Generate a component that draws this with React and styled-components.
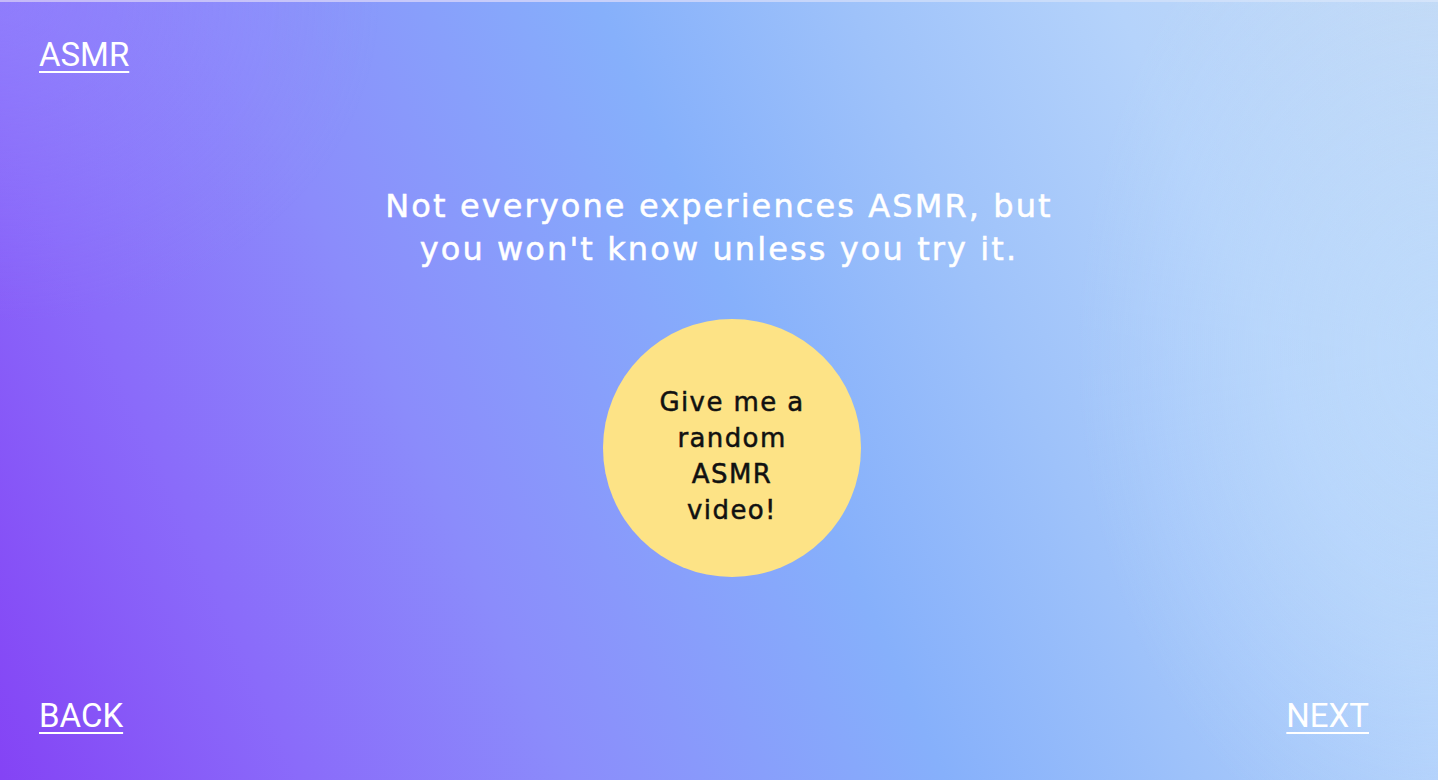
import React from "react";
import styled, { createGlobalStyle } from "styled-components";

const GlobalStyle = createGlobalStyle`
  html, body {
    margin: 0;
    padding: 0;
  }
  body {
    font-family: "DejaVu Sans", "Liberation Sans", sans-serif;
  }
  * {
    box-sizing: border-box;
  }
`;

const App = () => {
  return (
    <>
      <GlobalStyle />
      <Page>
        <Header>
          <NavLink href="#">ASMR</NavLink>
        </Header>
        <Main>
          <Question>
            Not everyone experiences ASMR, but
            <br />
            you won't know unless you try it.
          </Question>
          <RandomButton>
            Give me a
            <br />
            random
            <br />
            ASMR
            <br />
            video!
          </RandomButton>
        </Main>
        <Footer>
          <NavLink href="#">BACK</NavLink>
          <NavLink href="#">NEXT</NavLink>
        </Footer>
      </Page>
    </>
  );
};

export default App;

const Page = styled.div`
  height: 780px;
  display: flex;
  flex-direction: column;
  border-top: 2px solid rgba(225, 235, 250, 0.7);
  background:
    radial-gradient(ellipse 380px 320px at 0% 0%, rgba(150, 140, 255, 0.45), rgba(150, 140, 255, 0) 100%),
    radial-gradient(ellipse 360px 520px at 100% 45%, rgba(190, 220, 253, 0.7), rgba(190, 220, 253, 0) 100%),
    linear-gradient(
      66deg,
      #8443f5 0%,
      #8a6bfa 17%,
      #8b8cfb 32%,
      #889ffb 43%,
      #86b0fb 53%,
      #9ec2fa 67%,
      #b5d3fb 82%,
      #c4daf5 100%
    );
  overflow: hidden;
`;

const Header = styled.header`
  padding: 33px 39px 0;
`;

const NavLink = styled.a`
  font-family: Roboto, "Liberation Sans", sans-serif;
  font-size: 33px;
  line-height: 39px;
  color: #fff;
  text-decoration: underline;
  text-decoration-thickness: 2px;
  text-underline-offset: 5px;
`;

const Main = styled.main`
  flex: 1;
  display: flex;
  flex-direction: column;
  align-items: center;
  padding-top: 111px;
`;

const Question = styled.h1`
  margin: 0;
  font-family: "DejaVu Sans", "Liberation Sans", sans-serif;
  font-weight: 400;
  font-size: 32px;
  line-height: 43px;
  letter-spacing: 2.1px;
  -webkit-text-stroke: 0.5px #fff;
  color: #fff;
  text-align: center;
`;

const RandomButton = styled.button`
  margin: 48px 0 0 26px;
  padding: 16px 0 0;
  width: 258px;
  height: 258px;
  border: none;
  border-radius: 50%;
  background: #fde386;
  color: #111;
  font-family: "DejaVu Sans", "Liberation Sans", sans-serif;
  font-weight: 400;
  font-size: 26px;
  line-height: 36px;
  letter-spacing: 1.4px;
  -webkit-text-stroke: 0.5px #111;
  cursor: pointer;
`;

const Footer = styled.footer`
  display: flex;
  justify-content: space-between;
  padding: 0 69px 45px 39px;
`;
